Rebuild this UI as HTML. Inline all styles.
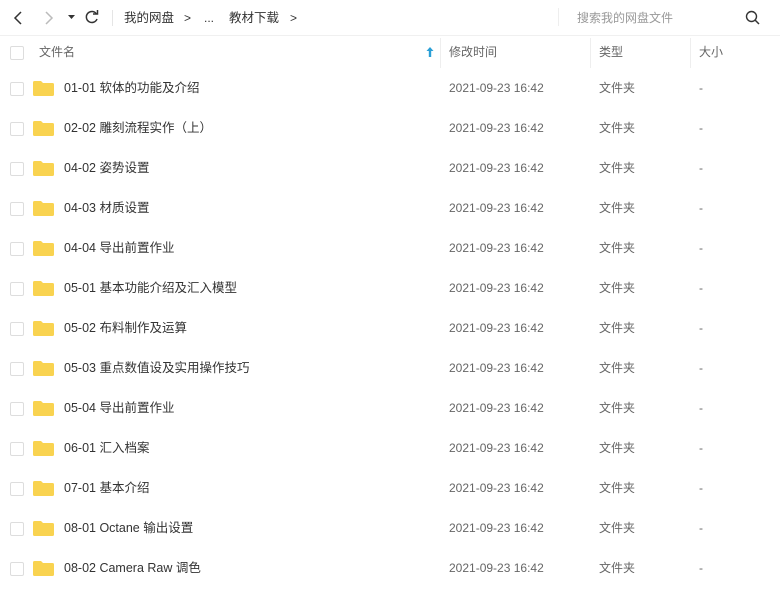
<!DOCTYPE html><html><head><meta charset="utf-8"><style>
body{margin:0;width:780px;height:593px;background:#fff;font-family:"Liberation Sans","Noto Sans CJK SC",sans-serif;font-size:12px;color:#333;position:relative;overflow:hidden}
.a{position:absolute;white-space:nowrap;line-height:16px;height:16px}
.cb{position:absolute;left:10px;width:12px;height:12px;border:1px solid #ddd;border-radius:2px;background:#fff}
.fd{position:absolute;left:33px;width:21px;height:15px}
.g{color:#666}
.sep{position:absolute;width:1px;background:#eee}
</style></head><body>
<svg class="a" style="left:12px;top:10px" width="14" height="16"><path d="M9 2L3 8l6 6" stroke="#333" stroke-width="1.5" fill="none"/></svg>
<svg class="a" style="left:42px;top:10px" width="14" height="16"><path d="M4 2l6 6-6 6" stroke="#bbb" stroke-width="1.5" fill="none"/></svg>
<svg class="a" style="left:68px;top:15px" width="8" height="6"><path d="M0 0h7L3.5 4z" fill="#333"/></svg>
<svg class="a" style="left:84px;top:9px" width="16" height="16"><path d="M12.5 5A5.5 5.5 0 1 0 13 10" stroke="#333" stroke-width="1.5" fill="none"/><path d="M9 5h4.5V1" stroke="#333" stroke-width="1.5" fill="none"/></svg>
<div class="sep" style="left:112px;top:10px;height:16px;background:#e5e5e5"></div>
<div class="a" style="left:124px;top:10px;font-size:12.5px">我的网盘</div>
<div class="a" style="left:184px;top:10px">&gt;</div>
<div class="a" style="left:204px;top:10px">...</div>
<div class="a" style="left:229px;top:10px;font-size:12.5px">教材下载</div>
<div class="a" style="left:290px;top:10px">&gt;</div>
<div class="sep" style="left:558px;top:8px;height:18px"></div>
<div class="a" style="left:577px;top:10px;color:#999">搜索我的网盘文件</div>
<svg class="a" style="left:745px;top:10px" width="16" height="16"><circle cx="6.5" cy="6.5" r="5" stroke="#333" stroke-width="1.4" fill="none"/><path d="M10 10l4 4" stroke="#333" stroke-width="1.5"/></svg>
<div class="a" style="left:0;top:35px;width:780px;height:1px;background:#f0f0f0"></div>
<div class="cb" style="top:46px"></div>
<div class="a g" style="left:39px;top:44px">文件名</div>
<svg class="a" style="left:425px;top:46px" width="10" height="12"><path d="M5 1L1.5 5h2.3v6h2.4V5h2.3z" fill="#2a9fd6"/></svg>
<div class="sep" style="left:440px;top:38px;height:30px"></div>
<div class="a g" style="left:449px;top:44px">修改时间</div>
<div class="sep" style="left:590px;top:38px;height:30px"></div>
<div class="a g" style="left:599px;top:44px">类型</div>
<div class="sep" style="left:690px;top:38px;height:30px"></div>
<div class="a g" style="left:699px;top:44px">大小</div>
<div id="rows"></div>
<script>
var n=["01-01 软体的功能及介绍","02-02 雕刻流程实作（上）","04-02 姿势设置","04-03 材质设置","04-04 导出前置作业","05-01 基本功能介绍及汇入模型","05-02 布料制作及运算","05-03 重点数值设及实用操作技巧","05-04 导出前置作业","06-01 汇入档案","07-01 基本介绍","08-01 Octane 输出设置","08-02 Camera Raw 调色"];
var h="";n.forEach(function(t,i){var y=88+40*i;
h+='<div class="cb" style="top:'+(y-6)+'px"></div>'+
'<svg class="fd" style="top:'+(y-7)+'px" viewBox="0 0 21 15"><path d="M0 1.5Q0 0 1.5 0H8l2 2h9.5Q21 2 21 3.5V13.5Q21 15 19.5 15H1.5Q0 15 0 13.5z" fill="#f9d350"/></svg>'+
'<div class="a" style="left:64px;top:'+(y-8)+'px;font-size:12.5px">'+t+'</div>'+
'<div class="a g" style="left:449px;top:'+(y-8)+'px">2021-09-23 16:42</div>'+
'<div class="a g" style="left:599px;top:'+(y-8)+'px">文件夹</div>'+
'<div class="a g" style="left:699px;top:'+(y-8)+'px">-</div>';});
document.getElementById("rows").innerHTML=h;
</script>
</body></html>
